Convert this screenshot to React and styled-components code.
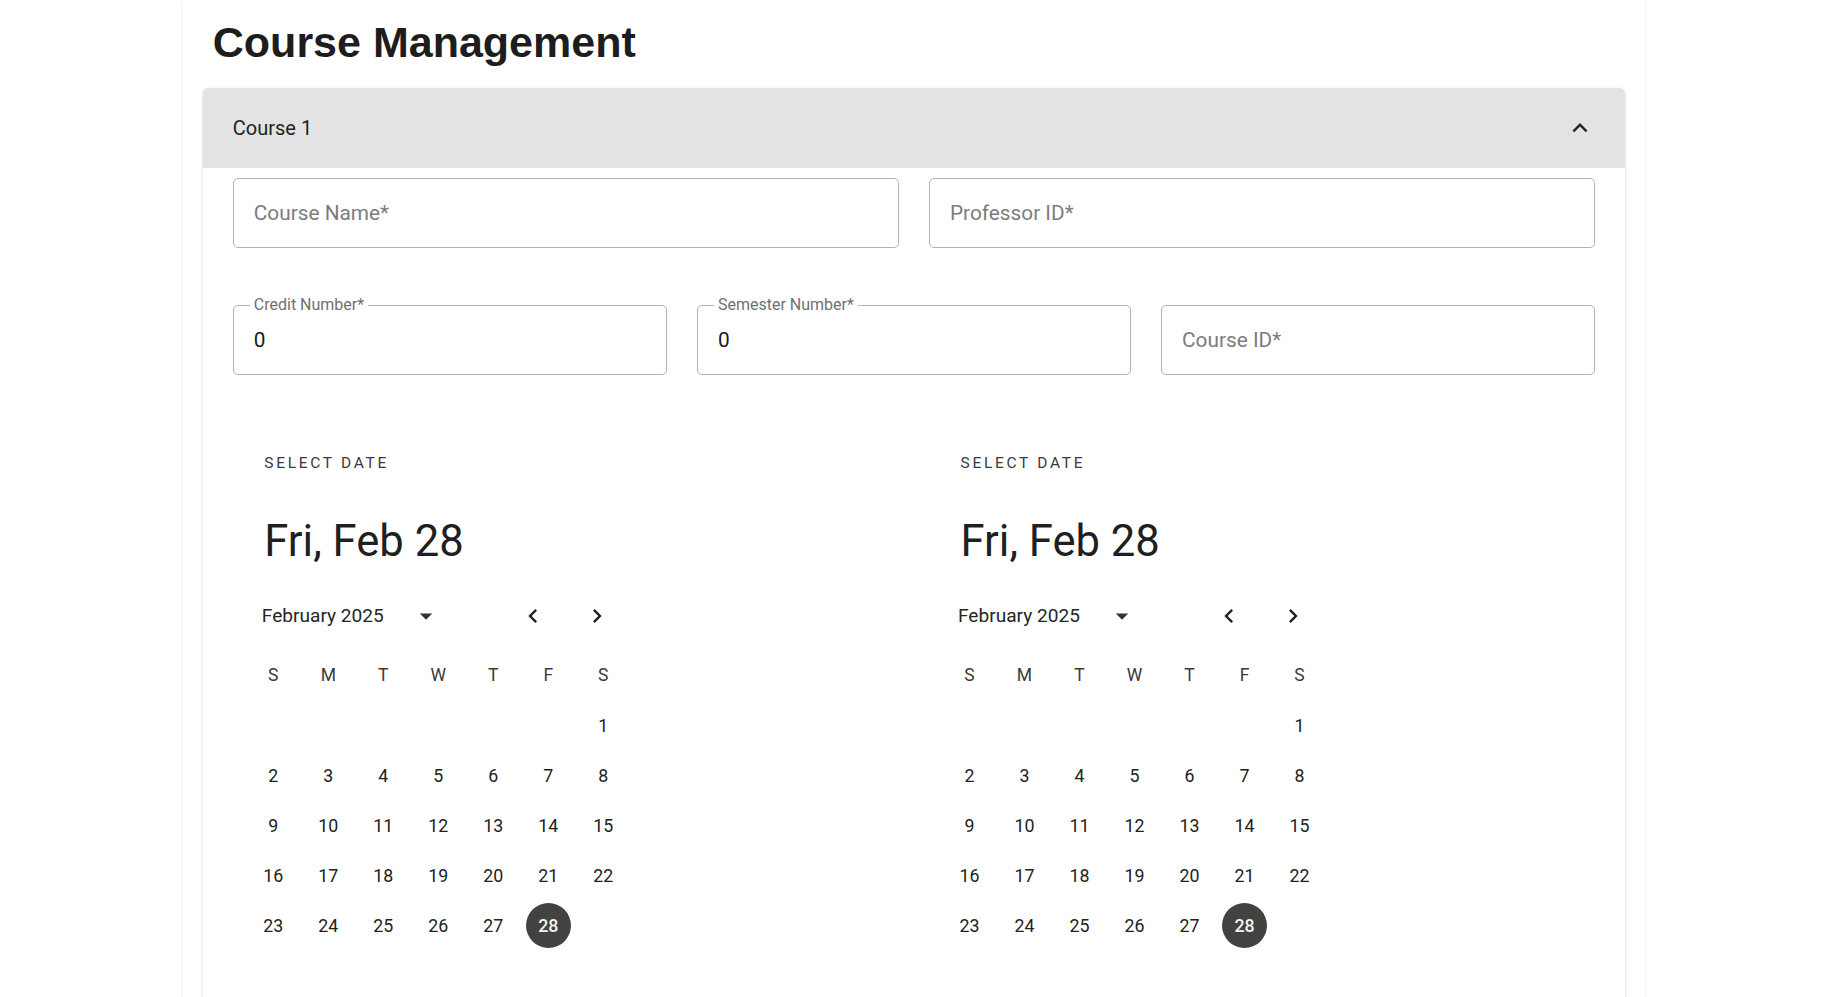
import React from "react";
import styled, { createGlobalStyle } from "styled-components";

const GlobalStyle = createGlobalStyle`
  html, body { margin: 0; padding: 0; background: #ffffff; }
  body { font-family: Roboto, "Liberation Sans", sans-serif; color: #222; }
  * { box-sizing: border-box; }
`;

const Page = styled.div`
  width: 80%;
  min-height: 100vh;
  margin: 0 auto;
  padding: 21px 20px 0;
  background: #fff;
  box-shadow: 0 0 4px rgba(0, 0, 0, 0.09);
`;

const Title = styled.h1`
  margin: 0 0 24px 10px;
  font-family: "Liberation Sans", Arial, sans-serif;
  font-weight: 700;
  font-size: 43px;
  line-height: 43px;
  color: #1d1d1d;
`;

const Accordion = styled.section`
  background: #fff;
  border-radius: 5px 5px 0 0;
  box-shadow: 0 2.5px 1.25px -1.25px rgba(0, 0, 0, 0.2),
    0 1.25px 1.25px 0 rgba(0, 0, 0, 0.14), 0 1.25px 3.75px 0 rgba(0, 0, 0, 0.12);
`;

const Summary = styled.div`
  height: 80px;
  padding: 0 30px;
  display: flex;
  align-items: center;
  justify-content: space-between;
  background: #e3e3e3;
  border-radius: 5px 5px 0 0;
  font-size: 20px;
  color: #222;
`;

const ExpandIcon = styled.svg`
  width: 30px;
  height: 30px;
  fill: #262626;
  transform: rotate(180deg);
`;

const Details = styled.div`
  padding: 10px 30px 20px;
`;

const FieldRow = styled.div`
  display: grid;
  grid-template-columns: repeat(${(p) => p.$cols}, 1fr);
  gap: 30px;
  margin-bottom: ${(p) => p.$mb || 0}px;
`;

const FieldBox = styled.div`
  position: relative;
  height: 70px;
  border: 1px solid #b1b1b1;
  border-radius: 5px;
  padding: 0 18px 0 20px;
  display: flex;
  align-items: center;
`;

const FloatLabel = styled.span`
  position: absolute;
  left: 16px;
  top: -11px;
  padding: 0 4px;
  background: #fff;
  font-size: 16px;
  line-height: 20px;
  color: #707070;
  white-space: nowrap;
`;

const Input = styled.input`
  width: 100%;
  border: none;
  outline: none;
  background: transparent;
  font-family: Roboto, "Liberation Sans", sans-serif;
  font-size: 20.8px;
  color: #1a1a1a;
  padding: 0;
  &::placeholder { color: #7c7c7c; opacity: 1; }
`;

const PickerRow = styled.div`
  display: grid;
  grid-template-columns: 1fr 1fr;
  gap: 30px;
  margin-top: 56px;
`;

const Picker = styled.div`
  display: flex;
  flex-direction: column;
  padding-bottom: 90px;
`;

const Toolbar = styled.div`
  padding: 20px 0 0 31.5px;
  display: flex;
  flex-direction: column;
`;

const SelectLabel = styled.span`
  font-size: 15.5px;
  line-height: 24px;
  letter-spacing: 2.7px;
  text-transform: uppercase;
  color: #3b3b3b;
`;

const DateTitle = styled.span`
  margin-top: 41px;
  font-size: 43.6px;
  line-height: 52px;
  color: #1f1f1f;
`;

const Calendar = styled.div`
  width: 400px;
  margin-top: 27.5px;
`;

const CalHeader = styled.div`
  height: 40px;
  padding: 0 15px 0 29px;
  display: flex;
  align-items: center;
`;

const MonthLabel = styled.span`
  font-size: 19.1px;
  color: #262626;
`;

const DropIcon = styled.svg`
  width: 30px;
  height: 30px;
  margin-left: 27px;
  fill: #333;
`;

const Spacer = styled.div`
  flex: 1;
`;

const NavButton = styled.div`
  width: 42px;
  height: 40px;
  display: flex;
  align-items: center;
  justify-content: center;
  margin-left: ${(p) => p.$ml || 0}px;
  svg { width: 28px; height: 28px; fill: #1f1f1f; }
`;

const DayGrid = styled.div`
  margin-top: 14.5px;
  padding-left: 13px;
  display: grid;
  grid-template-columns: repeat(7, 55px);
  grid-auto-rows: 50px;
`;

const WeekLabel = styled.span`
  display: flex;
  align-items: center;
  justify-content: center;
  font-size: 17.5px;
  color: #3a3a3a;
`;

const Day = styled.span`
  display: flex;
  align-items: center;
  justify-content: center;
  span {
    width: 45px;
    height: 45px;
    border-radius: 50%;
    display: flex;
    align-items: center;
    justify-content: center;
    font-size: 17.8px;
    color: ${(p) => (p.$selected ? "#f4f4f4" : "#222")};
    background: ${(p) => (p.$selected ? "#424242" : "transparent")};
    font-weight: ${(p) => (p.$selected ? 500 : 400)};
  }
`;

const weekdays = ["S", "M", "T", "W", "T", "F", "S"];
const cells = [
  ...Array(6).fill(null),
  ...Array.from({ length: 28 }, (_, i) => i + 1),
];

function Field({ label, value, placeholder }) {
  return (
    <FieldBox>
      {label && <FloatLabel>{label}</FloatLabel>}
      <Input defaultValue={value} placeholder={placeholder} />
    </FieldBox>
  );
}

function DatePicker() {
  return (
    <Picker>
      <Toolbar>
        <SelectLabel>Select date</SelectLabel>
        <DateTitle>Fri, Feb 28</DateTitle>
      </Toolbar>
      <Calendar>
        <CalHeader>
          <MonthLabel>February 2025</MonthLabel>
          <DropIcon viewBox="0 0 24 24">
            <path d="M7 10l5 5 5-5z" />
          </DropIcon>
          <Spacer />
          <NavButton>
            <svg viewBox="0 0 24 24">
              <path d="M15.41 16.59 10.83 12l4.58-4.59L14 6l-6 6 6 6 1.41-1.41z" />
            </svg>
          </NavButton>
          <NavButton $ml={22}>
            <svg viewBox="0 0 24 24">
              <path d="M8.59 16.59 13.17 12 8.59 7.41 10 6l6 6-6 6-1.41-1.41z" />
            </svg>
          </NavButton>
        </CalHeader>
        <DayGrid>
          {weekdays.map((d, i) => (
            <WeekLabel key={"w" + i}>{d}</WeekLabel>
          ))}
          {cells.map((d, i) => (
            <Day key={"d" + i} $selected={d === 28}>
              {d && <span>{d}</span>}
            </Day>
          ))}
        </DayGrid>
      </Calendar>
    </Picker>
  );
}

export default function App() {
  return (
    <>
      <GlobalStyle />
      <Page>
        <Title>Course Management</Title>
        <Accordion>
          <Summary>
            <span>Course 1</span>
            <ExpandIcon viewBox="0 0 24 24">
              <path d="M16.59 8.59 12 13.17 7.41 8.59 6 10l6 6 6-6z" />
            </ExpandIcon>
          </Summary>
          <Details>
            <FieldRow $cols={2} $mb={57}>
              <Field placeholder="Course Name*" />
              <Field placeholder="Professor ID*" />
            </FieldRow>
            <FieldRow $cols={3}>
              <Field label="Credit Number*" value="0" />
              <Field label="Semester Number*" value="0" />
              <Field placeholder="Course ID*" />
            </FieldRow>
            <PickerRow>
              <DatePicker />
              <DatePicker />
            </PickerRow>
          </Details>
        </Accordion>
      </Page>
    </>
  );
}
